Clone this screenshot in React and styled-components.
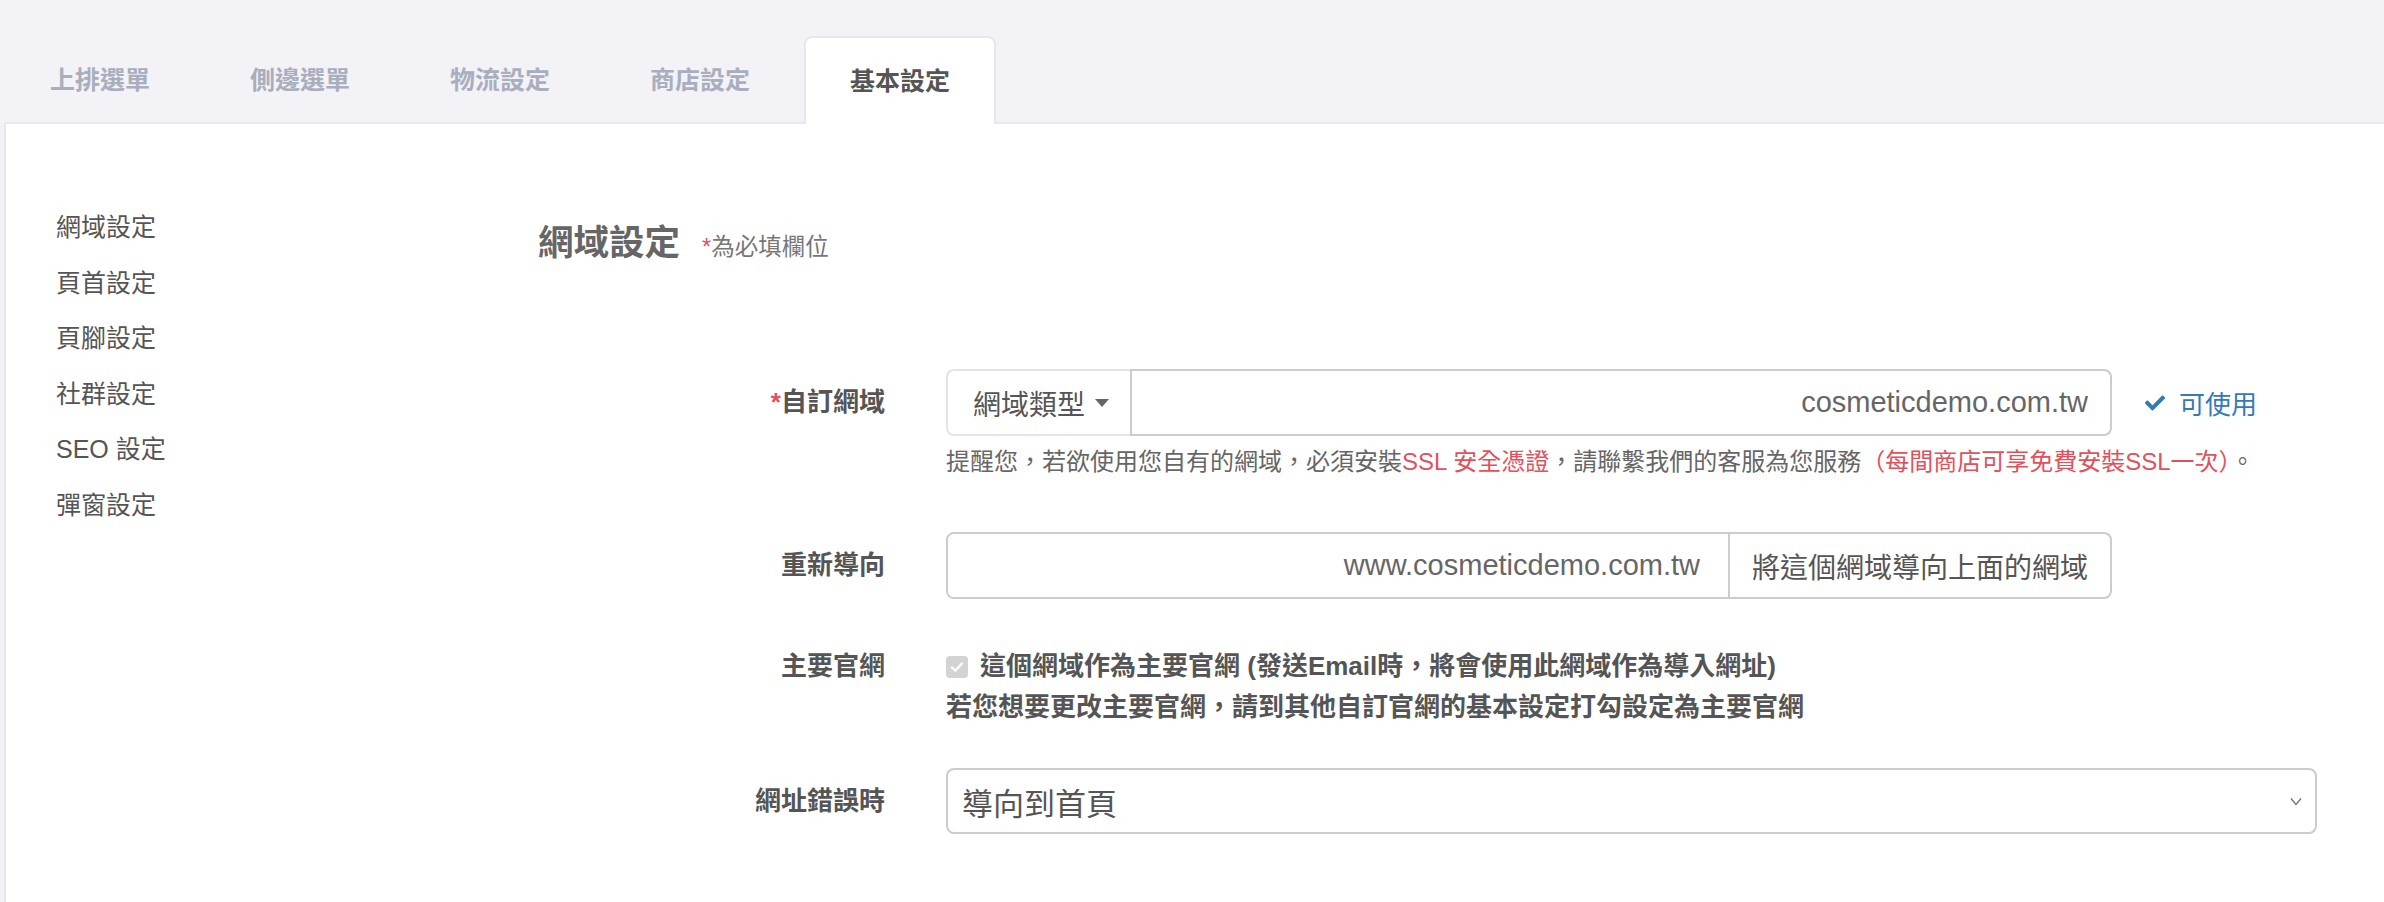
import React from "react";
import styled, { createGlobalStyle } from "styled-components";
import { FaCheck } from "react-icons/fa";

const FONT = `"Liberation Sans", "Noto Sans CJK TC", sans-serif`;

const GlobalStyle = createGlobalStyle`
  html, body {
    margin: 0;
    padding: 0;
    background: #f2f2f7;
  }
  body {
    font-family: ${FONT};
    color: #555;
  }
  * {
    box-sizing: border-box;
  }
`;

const tabs = ["上排選單", "側邊選單", "物流設定", "商店設定", "基本設定"];
const sideItems = ["網域設定", "頁首設定", "頁腳設定", "社群設定", "SEO 設定", "彈窗設定"];

function App() {
  const [activeTab, setActiveTab] = React.useState(4);

  return (
    <Page>
      <GlobalStyle />
      <TabBar>
        {tabs.map((tab, idx) => (
          <Tab key={tab} active={idx === activeTab} onClick={() => setActiveTab(idx)}>
            {tab}
          </Tab>
        ))}
      </TabBar>

      <Panel>
        <SideNav>
          {sideItems.map((item) => (
            <NavItem key={item}>{item}</NavItem>
          ))}
        </SideNav>

        <Main>
          <Heading>
            <Title>網域設定</Title>
            <Note>
              <Req>*</Req>為必填欄位
            </Note>
          </Heading>

          <Form>
            <FormRow gap={52}>
              <Label height={67}>
                <Req>*</Req>自訂網域
              </Label>
              <Field>
                <GroupLine>
                  <DomainGroup>
                    <DropBtn>
                      網域類型 <Caret />
                    </DropBtn>
                    <DomainInput readOnly value="cosmeticdemo.com.tw" />
                  </DomainGroup>
                  <Available>
                    <FaCheck size={20} />
                    可使用
                  </Available>
                </GroupLine>
                <Helper>
                  提醒您，若欲使用您自有的網域，必須安裝<Red>SSL 安全憑證</Red>
                  ，請聯繫我們的客服為您服務<Red>（每間商店可享免費安裝SSL一次）</Red>。
                </Helper>
              </Field>
            </FormRow>

            <FormRow gap={47}>
              <Label height={67}>重新導向</Label>
              <Field>
                <RedirectGroup>
                  <PlainInput readOnly value="www.cosmeticdemo.com.tw" />
                  <Addon>將這個網域導向上面的網域</Addon>
                </RedirectGroup>
              </Field>
            </FormRow>

            <FormRow gap={40}>
              <Label height={41}>主要官網</Label>
              <Field>
                <CheckLine>
                  <CheckBox>
                    <svg width="16" height="16" viewBox="0 0 16 16">
                      <path
                        d="M3 8.5l3.2 3.2L13 4.5"
                        fill="none"
                        stroke="#fff"
                        strokeWidth="2.4"
                        strokeLinecap="round"
                        strokeLinejoin="round"
                      />
                    </svg>
                  </CheckBox>
                  這個網域作為主要官網 (發送Email時，將會使用此網域作為導入網址)
                </CheckLine>
                <BoldLine>若您想要更改主要官網，請到其他自訂官網的基本設定打勾設定為主要官網</BoldLine>
              </Field>
            </FormRow>

            <FormRow gap={0}>
              <Label height={66}>網址錯誤時</Label>
              <Field>
                <SelectBox>
                  導向到首頁
                  <svg width="14" height="18" viewBox="0 0 14 18">
                    <path d="M2 6.5L7 12.5l5-6" fill="none" stroke="#777" strokeWidth="1.4" />
                  </svg>
                </SelectBox>
              </Field>
            </FormRow>
          </Form>
        </Main>
      </Panel>
    </Page>
  );
}

export default App;

const Page = styled.div`
  min-height: 100vh;
  display: flex;
  flex-direction: column;
`;

const TabBar = styled.div`
  height: 122px;
  display: flex;
  align-items: flex-end;
  gap: 8px;
  padding-left: 4px;
`;

const Tab = styled.div`
  position: relative;
  z-index: 1;
  height: ${(props) => (props.active ? "88px" : "86px")};
  margin-bottom: ${(props) => (props.active ? "-2px" : "0")};
  padding: 0 44px 4px;
  display: flex;
  align-items: center;
  border: 2px solid ${(props) => (props.active ? "#e7e7ed" : "transparent")};
  border-bottom: none;
  border-radius: 8px 8px 0 0;
  background: ${(props) => (props.active ? "#fff" : "transparent")};
  color: ${(props) => (props.active ? "#555" : "#a9aebd")};
  font-size: 25px;
  font-weight: 700;
  cursor: pointer;
`;

const Panel = styled.div`
  flex: 1;
  margin-left: 4px;
  background: #fff;
  border-top: 2px solid #e7e7ed;
  border-left: 2px solid #e7e7ed;
  display: grid;
  grid-template-columns: 532px 1fr;
`;

const SideNav = styled.div`
  padding: 76px 0 0 50px;
`;

const NavItem = styled.div`
  font-size: 25px;
  line-height: 55.5px;
  color: #555;
`;

const Main = styled.div`
  padding-top: 95px;
`;

const Heading = styled.div`
  display: flex;
  align-items: baseline;
  gap: 22px;
`;

const Title = styled.h2`
  margin: 0;
  font-size: 35.5px;
  line-height: 48px;
  font-weight: 700;
  color: #666;
`;

const Note = styled.span`
  font-size: 23.5px;
  color: #777;
`;

const Req = styled.span`
  color: #e2505e;
`;

const Red = styled.span`
  color: #e2505e;
`;

const Form = styled.div`
  margin-top: 102px;
`;

const FormRow = styled.div`
  display: grid;
  grid-template-columns: 347px 1fr;
  column-gap: 61px;
  margin-bottom: ${(props) => props.gap}px;
`;

const Label = styled.div`
  text-align: right;
  font-size: 26px;
  font-weight: 700;
  color: #555;
  line-height: ${(props) => props.height}px;
`;

const Field = styled.div`
  display: flex;
  flex-direction: column;
`;

const GroupLine = styled.div`
  display: flex;
  align-items: center;
`;

const DomainGroup = styled.div`
  width: 1166px;
  height: 67px;
  display: flex;
`;

const DropBtn = styled.div`
  width: 184px;
  display: flex;
  align-items: center;
  gap: 10px;
  padding-left: 25px;
  border: 2px solid #e4e4e4;
  border-right: none;
  border-radius: 8px 0 0 8px;
  font-size: 28px;
  color: #555;
`;

const Caret = styled.span`
  width: 0;
  height: 0;
  border-left: 7px solid transparent;
  border-right: 7px solid transparent;
  border-top: 8px solid #666;
`;

const DomainInput = styled.input`
  flex: 1;
  min-width: 0;
  border: 2px solid #ccc;
  border-radius: 0 8px 8px 0;
  padding: 0 22px 0 12px;
  text-align: right;
  font-family: ${FONT};
  font-size: 29px;
  color: #666;
  outline: none;
  background: #fff;
`;

const Available = styled.div`
  margin-left: 33px;
  display: flex;
  align-items: center;
  gap: 14px;
  color: #337ab7;
  font-size: 26px;
`;

const Helper = styled.div`
  margin-top: 8px;
  font-size: 24px;
  line-height: 36px;
  color: #666;
  white-space: nowrap;
`;

const RedirectGroup = styled.div`
  width: 1166px;
  height: 67px;
  display: flex;
  border: 2px solid #ccc;
  border-radius: 8px;
  overflow: hidden;
`;

const PlainInput = styled.input`
  flex: 1;
  min-width: 0;
  border: none;
  padding: 0 28px 0 12px;
  text-align: right;
  font-family: ${FONT};
  font-size: 29px;
  color: #666;
  outline: none;
  background: #fff;
`;

const Addon = styled.div`
  display: flex;
  align-items: center;
  padding: 0 22px;
  border-left: 2px solid #ccc;
  font-size: 28px;
  color: #555;
  white-space: nowrap;
`;

const CheckLine = styled.div`
  display: flex;
  align-items: center;
  gap: 12px;
  font-size: 26px;
  font-weight: 700;
  line-height: 41px;
  color: #555;
  white-space: nowrap;
`;

const CheckBox = styled.span`
  width: 22px;
  height: 22px;
  border-radius: 4px;
  background: #d3d3d3;
  display: flex;
  align-items: center;
  justify-content: center;
  flex-shrink: 0;
`;

const BoldLine = styled.div`
  font-size: 26px;
  font-weight: 700;
  line-height: 41px;
  color: #555;
  white-space: nowrap;
`;

const SelectBox = styled.div`
  width: 1371px;
  height: 66px;
  display: flex;
  align-items: center;
  justify-content: space-between;
  padding: 0 12px 0 14px;
  border: 2px solid #ccc;
  border-radius: 8px;
  font-size: 31px;
  color: #555;
`;
